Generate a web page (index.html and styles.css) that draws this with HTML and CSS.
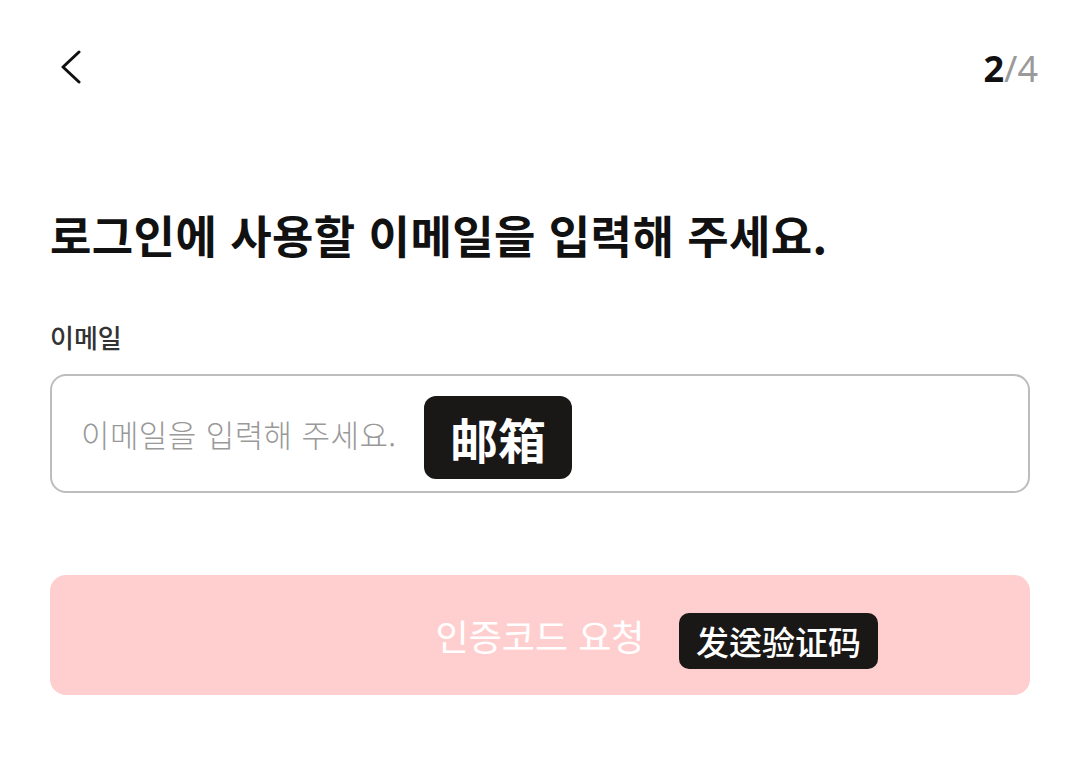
FILE: index.html
```html
<!DOCTYPE html>
<html lang="ko">
<head>
<meta charset="utf-8">
<link rel="stylesheet" href="styles.css">
</head>
<body>
<div class="page">
  <header class="top">
    <button class="back" aria-label="뒤로">
      <svg width="24" height="36" viewBox="0 0 24 36"><path d="M19 2 L3 17 L19 32" fill="none" stroke="#111" stroke-width="3" stroke-linecap="round" stroke-linejoin="round"/></svg>
    </button>
    <div class="step"><b>2</b><span>/4</span></div>
  </header>
  <h1 class="title">로그인에 사용할 이메일을 입력해 주세요.</h1>
  <label class="label">이메일</label>
  <div class="input">
    <span class="placeholder">이메일을 입력해 주세요.</span>
    <span class="tag tag-lg">邮箱</span>
  </div>
  <div class="btn">
    <span class="btn-text">인증코드 요청</span>
    <span class="tag tag-sm">发送验证码</span>
  </div>
</div>
</body>
</html>
```
FILE: styles.css
```css
* { box-sizing: border-box; }
html, body { margin: 0; padding: 0; background: #fff; }
body { font-family: "Noto Sans CJK KR", "Noto Sans", sans-serif; color: #111; }
.page { padding: 0 50px; width: 1080px; height: 773px; }
.top { display: flex; justify-content: space-between; align-items: center; height: 140px; }
.back { border: 0; background: none; padding: 0; margin-left: 10px; margin-top: -4px; width: 24px; height: 36px; display: block; }
.step { font-family: "Noto Sans", sans-serif; font-size: 36px; margin-top: -4px; margin-right: -8px; }
.step b { font-weight: 700; color: #111; }
.step span { color: #9a9a9a; }
.title { margin: 0; font-size: 45px; font-weight: 700; letter-spacing: 0.4px; line-height: 56px; margin-top: 67px; }
.label { display: block; font-size: 26px; font-weight: 500; color: #333; line-height: 34px; margin-top: 57px; }
.input { position: relative; margin-top: 20px; height: 119px; border: 2px solid #bdbdbd; border-radius: 16px; display: flex; align-items: center; padding-left: 29px; }
.placeholder { font-size: 31px; font-weight: 300; color: #999; letter-spacing: 0.4px; }
.tag { position: absolute; background: #1a1717; color: #fff; font-family: "Noto Sans CJK SC", sans-serif; font-weight: 700; display: flex; align-items: center; justify-content: center; }
.tag-lg { left: 372px; top: 20px; width: 148px; height: 83px; border-radius: 12px; font-size: 48px; }
.btn { position: relative; margin-top: 82px; height: 120px; background: #ffcfcf; border-radius: 16px; display: flex; align-items: center; justify-content: center; }
.btn-text { color: #fff; font-size: 36px; font-weight: 400; }
.tag-sm { left: 629px; top: 38px; width: 199px; height: 56px; border-radius: 10px; font-size: 33px; font-weight: 500; }
```
